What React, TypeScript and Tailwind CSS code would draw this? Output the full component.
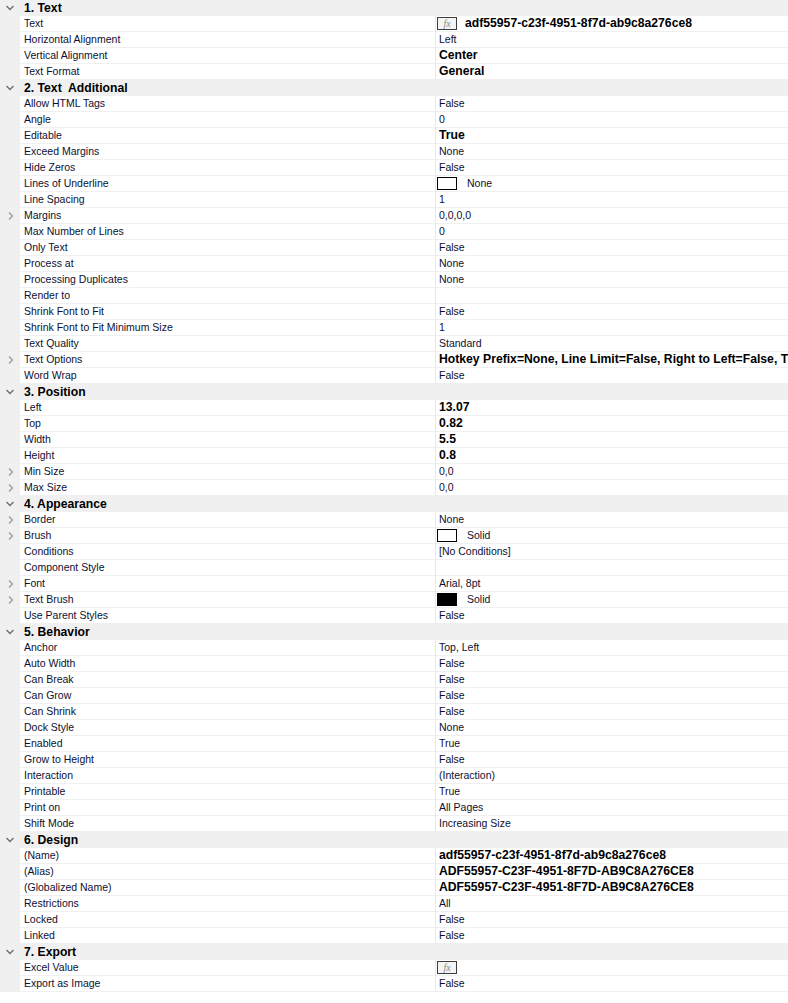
import React from "react";

type Item = {
    name: string;
    value?: string;
    bold?: boolean;
    expand?: boolean;
    fx?: boolean;
    swatch?: "white" | "black";
};

type Section = {
    title: string;
    items: Item[];
};

const sections: Section[] = [
    {
        title: "1. Text",
        items: [
            { name: "Text", value: "adf55957-c23f-4951-8f7d-ab9c8a276ce8", bold: true, fx: true },
            { name: "Horizontal Alignment", value: "Left" },
            { name: "Vertical Alignment", value: "Center", bold: true },
            { name: "Text Format", value: "General", bold: true },
        ],
    },
    {
        title: "2. Text  Additional",
        items: [
            { name: "Allow HTML Tags", value: "False" },
            { name: "Angle", value: "0" },
            { name: "Editable", value: "True", bold: true },
            { name: "Exceed Margins", value: "None" },
            { name: "Hide Zeros", value: "False" },
            { name: "Lines of Underline", value: "None", swatch: "white" },
            { name: "Line Spacing", value: "1" },
            { name: "Margins", value: "0,0,0,0", expand: true },
            { name: "Max Number of Lines", value: "0" },
            { name: "Only Text", value: "False" },
            { name: "Process at", value: "None" },
            { name: "Processing Duplicates", value: "None" },
            { name: "Render to", value: "" },
            { name: "Shrink Font to Fit", value: "False" },
            { name: "Shrink Font to Fit Minimum Size", value: "1" },
            { name: "Text Quality", value: "Standard" },
            {
                name: "Text Options",
                value: "Hotkey Prefix=None, Line Limit=False, Right to Left=False, Trimming=None",
                bold: true,
                expand: true,
            },
            { name: "Word Wrap", value: "False" },
        ],
    },
    {
        title: "3. Position",
        items: [
            { name: "Left", value: "13.07", bold: true },
            { name: "Top", value: "0.82", bold: true },
            { name: "Width", value: "5.5", bold: true },
            { name: "Height", value: "0.8", bold: true },
            { name: "Min Size", value: "0,0", expand: true },
            { name: "Max Size", value: "0,0", expand: true },
        ],
    },
    {
        title: "4. Appearance",
        items: [
            { name: "Border", value: "None", expand: true },
            { name: "Brush", value: "Solid", expand: true, swatch: "white" },
            { name: "Conditions", value: "[No Conditions]" },
            { name: "Component Style", value: "" },
            { name: "Font", value: "Arial, 8pt", expand: true },
            { name: "Text Brush", value: "Solid", expand: true, swatch: "black" },
            { name: "Use Parent Styles", value: "False" },
        ],
    },
    {
        title: "5. Behavior",
        items: [
            { name: "Anchor", value: "Top, Left" },
            { name: "Auto Width", value: "False" },
            { name: "Can Break", value: "False" },
            { name: "Can Grow", value: "False" },
            { name: "Can Shrink", value: "False" },
            { name: "Dock Style", value: "None" },
            { name: "Enabled", value: "True" },
            { name: "Grow to Height", value: "False" },
            { name: "Interaction", value: "(Interaction)" },
            { name: "Printable", value: "True" },
            { name: "Print on", value: "All Pages" },
            { name: "Shift Mode", value: "Increasing Size" },
        ],
    },
    {
        title: "6. Design",
        items: [
            { name: "(Name)", value: "adf55957-c23f-4951-8f7d-ab9c8a276ce8", bold: true },
            { name: "(Alias)", value: "ADF55957-C23F-4951-8F7D-AB9C8A276CE8", bold: true },
            { name: "(Globalized Name)", value: "ADF55957-C23F-4951-8F7D-AB9C8A276CE8", bold: true },
            { name: "Restrictions", value: "All" },
            { name: "Locked", value: "False" },
            { name: "Linked", value: "False" },
        ],
    },
    {
        title: "7. Export",
        items: [
            { name: "Excel Value", value: "", fx: true },
            { name: "Export as Image", value: "False" },
        ],
    },
];

const ChevronDown = () => (
    <svg width="10" height="8" viewBox="0 0 10 8" className="block">
        <polyline points="1.5,2 5,5.5 8.5,2" fill="none" stroke="#6e6e6e" strokeWidth="1.4" />
    </svg>
);

const ChevronRight = () => (
    <svg width="8" height="10" viewBox="0 0 8 10" className="block">
        <polyline points="2,1.5 5.5,5 2,8.5" fill="none" stroke="#9a9a9a" strokeWidth="1.3" />
    </svg>
);

const FxBox = () => (
    <span className="flex h-[13px] w-[20px] shrink-0 items-center justify-center border border-[#3c3c3c] bg-[#f4f4f4] font-['Liberation_Serif',serif] text-[10px] italic leading-none text-[#8a8a8a]">
        fx
    </span>
);

const Swatch = ({ color }: { color: "white" | "black" }) => (
    <span
        className={
            color === "black"
                ? "block h-[13px] w-[20px] shrink-0 border border-black bg-black"
                : "block h-[13px] w-[20px] shrink-0 border border-black bg-white"
        }
    ></span>
);

function PropertyRow({ item }: { item: Item }) {
    const hasBox = item.fx || item.swatch;
    return (
        <div className="flex h-[16px]">
            <div className="flex w-[20px] shrink-0 items-center justify-center bg-[#f0f0f0] pl-[2px]">
                {item.expand && <ChevronRight></ChevronRight>}
            </div>
            <div className="flex w-[415px] shrink-0 items-center border-b border-[#f0f0f0] pl-[4px] text-[10.5px] text-[#0d1030]">
                {item.name}
            </div>
            <div className="w-px shrink-0 bg-[#e8e8e8]"></div>
            <div className="flex min-w-0 flex-1 items-center gap-[8px] overflow-hidden whitespace-nowrap border-b border-[#f0f0f0] pl-[1px]">
                {item.fx && <FxBox></FxBox>}
                {item.swatch && <Swatch color={item.swatch}></Swatch>}
                <span
                    className={
                        item.bold
                            ? hasBox
                                ? "text-[12.2px] font-bold text-black"
                                : "pl-[2px] text-[12.2px] font-bold text-black"
                            : "pl-[2px] text-[10.5px] text-[#0d1030]"
                    }
                >
                    {item.value}
                </span>
            </div>
        </div>
    );
}

function SectionHeader({ title }: { title: string }) {
    return (
        <div className="flex h-[16px] items-center bg-[#f0f0f0]">
            <div className="flex w-[20px] shrink-0 items-center justify-center">
                <ChevronDown></ChevronDown>
            </div>
            <div className="whitespace-pre pl-[4px] text-[12.2px] font-bold text-black">{title}</div>
        </div>
    );
}

export default function App() {
    return (
        <div className="h-[1003px] w-[788px] overflow-hidden bg-white font-['Liberation_Sans',Arial,sans-serif] leading-none">
            {sections.map((section) => (
                <div key={section.title}>
                    <SectionHeader title={section.title}></SectionHeader>
                    {section.items.map((item) => (
                        <PropertyRow key={item.name} item={item}></PropertyRow>
                    ))}
                </div>
            ))}
        </div>
    );
}
